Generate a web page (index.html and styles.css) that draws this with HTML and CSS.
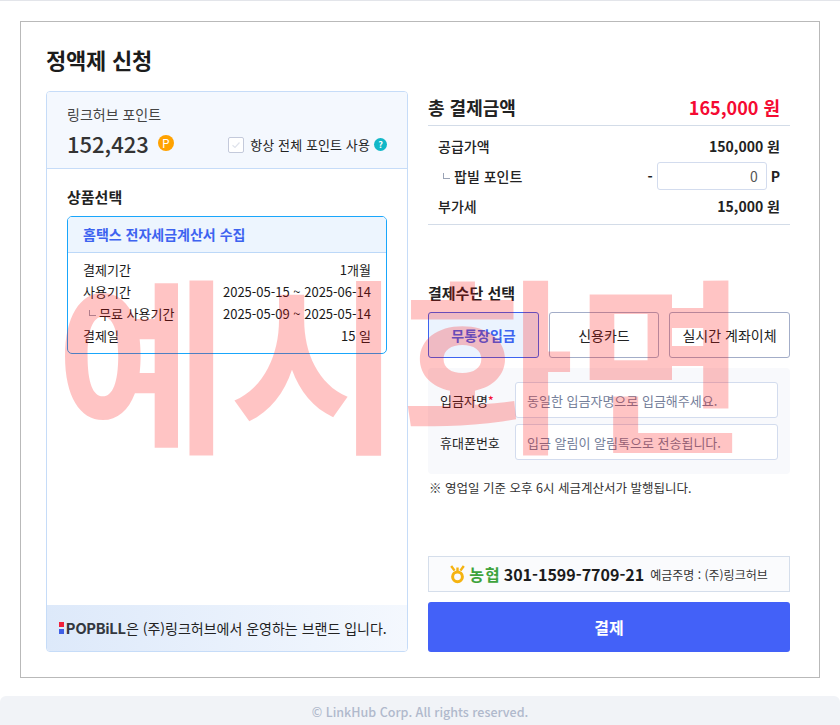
FILE: index.html
```html
<!DOCTYPE html>
<html lang="ko">

<head>
  <meta charset="UTF-8">
  <title>정액제 신청</title>
  <link rel="stylesheet" href="styles.css">
</head>

<body>
  <div class="page">
    <div class="card">
      <h1 class="title">정액제 신청</h1>
      <div class="columns">
        <div class="left">
          <div class="point-box">
            <div class="point-label">링크허브 포인트</div>
            <div class="point-row">
              <span class="point-num">152,423</span>
              <span class="point-icon">P</span>
              <label class="point-check">
                <span class="check">
                  <svg width="10" height="8" viewBox="0 0 10 8"><path d="M1.5 4.2 L4 6.5 L8.5 1.5" fill="none" stroke="#dfe3ec" stroke-width="1.2"/></svg>
                </span>
                항상 전체 포인트 사용
                <span class="help">?</span>
              </label>
            </div>
          </div>
          <div class="product">
            <h2 class="sub-title">상품선택</h2>
            <div class="product-box">
              <div class="product-head">홈택스 전자세금계산서 수집</div>
              <ul class="product-list">
                <li><span>결제기간</span><span>1개월</span></li>
                <li><span>사용기간</span><span>2025-05-15 ~ 2025-06-14</span></li>
                <li><span class="free"><i class="corner"></i>무료 사용기간</span><span>2025-05-09 ~ 2025-05-14</span></li>
                <li><span>결제일</span><span>15 일</span></li>
              </ul>
            </div>
          </div>
          <div class="brand">
            <span class="brand-mark"><i class="red"></i><i class="blue"></i></span><span class="brand-name">POPBiLL</span><span>은 (주)링크허브에서 운영하는 브랜드 입니다.</span>
          </div>
        </div>

        <div class="right">
          <div class="total">
            <span class="total-label">총 결제금액</span>
            <span class="total-num">165,000 원</span>
          </div>
          <div class="detail">
            <div class="detail-row"><span>공급가액</span><strong>150,000 원</strong></div>
            <div class="detail-row sub">
              <span><i class="corner"></i>팝빌 포인트</span>
              <strong class="point-use">- <input class="point-input" type="text" value="0"> P</strong>
            </div>
            <div class="detail-row"><span>부가세</span><strong>15,000 원</strong></div>
          </div>

          <h2 class="sub-title pay-title">결제수단 선택</h2>
          <div class="pay-btns">
            <button class="pay-btn on">무통장입금</button>
            <button class="pay-btn">신용카드</button>
            <button class="pay-btn wide">실시간 계좌이체</button>
          </div>
          <div class="form">
            <div class="form-row">
              <label>입금자명<em>*</em></label>
              <input type="text" placeholder="동일한 입금자명으로 입금해주세요.">
            </div>
            <div class="form-row">
              <label>휴대폰번호</label>
              <input type="text" placeholder="입금 알림이 알림톡으로 전송됩니다.">
            </div>
          </div>
          <p class="note">※ 영업일 기준 오후 6시 세금계산서가 발행됩니다.</p>

          <div class="bank">
            <svg class="bank-logo" width="15" height="19" viewBox="0 0 15 19">
              <path d="M1.2 1 L4.6 5.6 M13.8 1 L10.4 5.6 M7.5 2.5 L7.5 6" fill="none" stroke="#f5b311" stroke-width="2.4"/>
              <circle cx="7.5" cy="11.8" r="4.9" fill="none" stroke="#f5b311" stroke-width="3"/>
            </svg>
            <span class="bank-name">농협</span>
            <span class="bank-num">301-1599-7709-21</span>
            <span class="bank-owner">예금주명 : (주)링크허브</span>
          </div>
          <button class="submit">결제</button>
        </div>
      </div>
    </div>
    <div class="footer">© LinkHub Corp. All rights reserved.</div>
    <div class="watermark">예시화면</div>
  </div>
</body>

</html>
```

FILE: styles.css
```css
* {
  box-sizing: border-box;
}

html,
body {
  margin: 0;
  padding: 0;
  background: #ffffff;
}

body {
  font-family: "Noto Sans CJK KR", "Noto Sans", sans-serif;
  color: #1a1a1a;
}

.page {
  position: relative;
  width: 840px;
  height: 725px;
  overflow: hidden;
  border-top: 1px solid #e3e5ea;
  padding-top: 20px;
}

.card {
  margin: 0 20px;
  width: 800px;
  height: 657px;
  border: 1px solid #b9b9b9;
  padding: 0 29px 25px 25px;
  display: flex;
  flex-direction: column;
}

.title {
  margin: 0;
  height: 69px;
  font-size: 22px;
  font-weight: 700;
  line-height: 32px;
  padding-top: 21px;
  color: #1c1c1c;
  letter-spacing: -0.2px;
}

.columns {
  display: flex;
  gap: 20px;
  flex: 1;
  min-height: 0;
}

/* left */
.left {
  width: 362px;
  display: flex;
  flex-direction: column;
  border: 1px solid #c6dcf8;
  border-radius: 4px;
  overflow: hidden;
}

.point-box {
  height: 77px;
  padding: 12px 20px 0;
  background: #f4f8fe;
  border-bottom: 1px solid #c6dcf8;
}

.point-label {
  font-size: 14px;
  line-height: 20px;
  color: #444444;
}

.point-row {
  display: flex;
  align-items: center;
  height: 30px;
  margin-top: 4px;
}

.point-num {
  font-size: 22px;
  font-weight: 500;
  color: #333333;
  line-height: 30px;
}

.point-icon {
  width: 16px;
  height: 16px;
  margin-left: 9px;
  border-radius: 50%;
  background: #ffa200;
  color: #ffffff;
  font-size: 12px;
  line-height: 16px;
  text-align: center;
}

.point-check {
  margin-left: auto;
  display: flex;
  align-items: center;
  font-size: 13px;
  color: #222222;
  margin-top: 3px;
  letter-spacing: 0.1px;
}

.check {
  width: 16px;
  height: 16px;
  margin-right: 6px;
  border: 1px solid #c4cadb;
  border-radius: 2px;
  background: #ffffff;
  display: flex;
  align-items: center;
  justify-content: center;
}

.help {
  width: 13px;
  height: 13px;
  margin-left: 4px;
  border-radius: 50%;
  background: #12b8c8;
  color: #ffffff;
  font-size: 9px;
  font-weight: 700;
  line-height: 13px;
  text-align: center;
}

.product {
  flex: 1;
  padding: 17px 20px 0;
}

.sub-title {
  margin: 0;
  font-size: 15px;
  font-weight: 700;
  line-height: 22px;
  color: #222222;
}

.product-box {
  margin-top: 8px;
  width: 320px;
  height: 138px;
  border: 1px solid #19a6fb;
  border-radius: 5px;
  overflow: hidden;
}

.product-head {
  height: 36px;
  padding-left: 15px;
  background: #edf5fe;
  border-bottom: 1px solid #bcd8f8;
  color: #3d63f0;
  font-size: 14px;
  font-weight: 700;
  line-height: 35px;
}

.product-list {
  list-style: none;
  margin: 0;
  padding: 6px 15px 0;
}

.product-list li {
  display: flex;
  justify-content: space-between;
  height: 22px;
  font-size: 13px;
  line-height: 22px;
  color: #1a1a1a;
}

.free {
  padding-left: 16px;
}

.corner {
  display: inline-block;
  width: 7px;
  height: 6px;
  margin-right: 4px;
  border-left: 1px solid #9aa3b5;
  border-bottom: 1px solid #9aa3b5;
  vertical-align: 3px;
}

.free .corner {
  margin-left: -10px;
  margin-right: 3px;
}

.brand {
  height: 46px;
  padding-left: 12px;
  display: flex;
  align-items: center;
  font-size: 14px;
  color: #222222;
  background: linear-gradient(90deg, #dde9fa, #f4f8fe);
}

.brand-mark {
  width: 5px;
  margin-right: 2px;
}

.brand-mark i {
  display: block;
  width: 5px;
  height: 5px;
}

.brand-mark .red {
  background: #f0213c;
  margin-bottom: 2px;
}

.brand-mark .blue {
  background: #3f5fe6;
}

.brand-name {
  font-family: Inter, "Liberation Sans", sans-serif;
  font-size: 14.5px;
  font-weight: 700;
  color: #333840;
  letter-spacing: 0;
}

/* right */
.right {
  width: 362px;
  display: flex;
  flex-direction: column;
}

.total {
  display: flex;
  justify-content: space-between;
  align-items: center;
  height: 35px;
  padding-right: 10px;
  border-bottom: 1px solid #d3dce8;
  font-size: 18px;
  font-weight: 700;
  line-height: 20px;
  padding-bottom: 3px;
}

.total-label {
  color: #222222;
}

.total-num {
  color: #f50a32;
}

.detail {
  height: 99px;
  padding: 5px 10px 0;
  border-bottom: 1px solid #d3dce8;
}

.detail-row {
  display: flex;
  justify-content: space-between;
  align-items: center;
  font-size: 14px;
  font-weight: 500;
  height: 30px;
  color: #222222;
}

.detail-row strong {
  font-weight: 700;
}

.detail-row.sub {
  padding-left: 5px;
}

.point-use {
  display: flex;
  align-items: center;
  gap: 4px;
}

.point-input {
  width: 110px;
  height: 28px;
  padding: 0 8px;
  border: 1px solid #d3dcee;
  border-radius: 3px;
  font-family: inherit;
  font-size: 14px;
  color: #555555;
  text-align: right;
  background: #ffffff;
}

.pay-title {
  margin-top: 57px;
}

.pay-btns {
  display: flex;
  gap: 10px;
  margin-top: 8px;
}

.pay-btn {
  width: 110px;
  height: 46px;
  padding: 0;
  border: 1px solid #a3adc8;
  border-radius: 3px;
  background: #ffffff;
  font-family: inherit;
  font-size: 14px;
  color: #222222;
}

.pay-btn.on {
  width: 111px;
  border-color: #3d63f0;
  background: #ebf3fe;
  color: #3d63f0;
  font-weight: 700;
}

.pay-btn.wide {
  width: 121px;
}

.form {
  margin-top: 10px;
  height: 106px;
  padding: 14px 12px 0;
  background: #f8f9fc;
  border-radius: 4px;
}

.form-row {
  display: flex;
  align-items: center;
  height: 36px;
  margin-bottom: 6px;
}

.form-row label {
  width: 75px;
  font-size: 13px;
  color: #222222;
}

.form-row em {
  font-style: normal;
  color: #f50a32;
}

.form-row input {
  width: 263px;
  height: 36px;
  padding: 0 11px;
  border: 1px solid #d3dcee;
  border-radius: 3px;
  background: #ffffff;
  font-family: inherit;
  font-size: 13px;
}

.form-row input::placeholder {
  color: #75809a;
  opacity: 1;
}

.note {
  margin: 4px 0 0;
  font-size: 12.5px;
  line-height: 19px;
  color: #333333;
  padding-left: 1px;
}

.bank {
  margin-top: auto;
  height: 36px;
  display: flex;
  align-items: center;
  justify-content: center;
  border: 1px solid #d5deeb;
  background: #fafbfd;
}

.bank-logo {
  margin-right: 4px;
}

.bank-name {
  font-size: 16px;
  font-weight: 700;
  color: #3ea33c;
  letter-spacing: 1px;
  margin-right: 3px;
}

.bank-num {
  font-size: 16px;
  font-weight: 700;
  color: #1c1c1c;
  margin-right: 6px;
}

.bank-owner {
  font-size: 12px;
  color: #333333;
}

.submit {
  margin-top: 10px;
  height: 50px;
  flex-shrink: 0;
  border: 0;
  border-radius: 3px;
  background: #4361f8;
  color: #ffffff;
  font-family: inherit;
  font-size: 16px;
  font-weight: 700;
}

/* footer */
.footer {
  margin-top: 18px;
  height: 29px;
  background: #f1f3f7;
  border-top-left-radius: 6px;
  border-top-right-radius: 6px;
  color: #b0b9cc;
  font-size: 12.5px;
  font-weight: 500;
  line-height: 31px;
  text-align: center;
}

.watermark {
  position: absolute;
  left: 56px;
  top: 215px;
  font-size: 188px;
  font-weight: 700;
  line-height: 280px;
  color: rgba(255, 0, 0, 0.23);
  white-space: nowrap;
  pointer-events: none;
}
```
